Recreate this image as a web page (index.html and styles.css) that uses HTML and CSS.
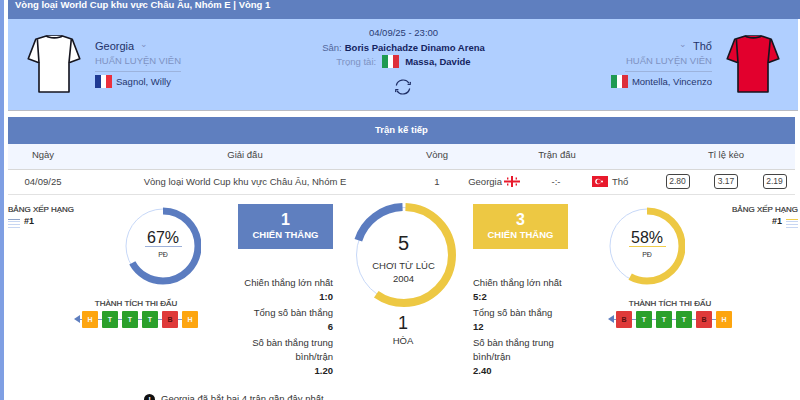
FILE: index.html
```html
<!DOCTYPE html>
<html lang="vi">
<head>
<meta charset="utf-8">
<title>Georgia - Thổ</title>
<link rel="stylesheet" href="styles.css">
</head>
<body>
<svg class="defs" width="0" height="0" aria-hidden="true">
  <defs>
    <symbol id="fr" viewBox="0 0 17 13"><rect width="6" height="13" fill="#1f3a93"/><rect x="6" width="5" height="13" fill="#fff"/><rect x="11" width="6" height="13" fill="#ec2f3c"/></symbol>
    <symbol id="it" viewBox="0 0 17 13"><rect width="6" height="13" fill="#1f9a52"/><rect x="6" width="5" height="13" fill="#fff"/><rect x="11" width="6" height="13" fill="#dd2f3c"/></symbol>
    <symbol id="shirt" viewBox="72 102 174 184"><path d="M135 108h50l30 10 23 60-33 12v90h-92v-90l-33-12 23-60z"/><path class="seam" d="M108 118l5 72M212 118l-7 72M135 108c10 8 40 8 50 0"/></symbol>
  </defs>
</svg>
<div class="page">
  <div class="strip"></div>
  <main class="main">
    <div class="title">Vòng loại World Cup khu vực Châu Âu, Nhóm E | Vòng 1</div>
    <section class="hero">
      <div class="team">
        <svg class="shirt shirt-white"><use href="#shirt"/></svg>
        <div class="team-info">
          <div class="team-name">Georgia <span class="chev">⌄</span></div>
          <div class="coach-label">HUẤN LUYỆN VIÊN</div>
          <div class="coach"><svg class="flag"><use href="#fr"/></svg>Sagnol, Willy</div>
        </div>
      </div>
      <div class="meta">
        <div>04/09/25 - 23:00</div>
        <div class="meta-line"><span class="muted">Sân:</span> <b>Boris Paichadze Dinamo Arena</b></div>
        <div class="meta-line"><span class="faint">Trọng tài:</span><svg class="flag"><use href="#it"/></svg><b>Massa, Davide</b></div>
        <svg class="refresh" width="18" height="18" viewBox="0 0 18 18" fill="none" stroke="#1f2f66" stroke-width="1.2">
          <path d="M2.3 7.5A7 7 0 0 1 15 5.2"/><path d="M15.7 10.5A7 7 0 0 1 3 12.8"/>
          <path d="M13.6 6.4l2.6.1.2-2.6" /><path d="M4.4 11.6l-2.6-.1-.2 2.6"/>
        </svg>
      </div>
      <div class="team team-away">
        <div class="team-info">
          <div class="team-name"><span class="chev">⌄</span> Thổ</div>
          <div class="coach-label">HUẤN LUYỆN VIÊN</div>
          <div class="coach"><svg class="flag"><use href="#it"/></svg>Montella, Vincenzo</div>
        </div>
        <svg class="shirt shirt-red"><use href="#shirt"/></svg>
      </div>
    </section>

    <div class="bar">Trận kế tiếp</div>
    <div class="grid-row head">
      <div>Ngày</div><div>Giải đấu</div><div>Vòng</div><div>Trận đấu</div><div>Tỉ lệ kèo</div>
    </div>
    <div class="grid-row body-row">
      <div>04/09/25</div>
      <div>Vòng loại World Cup khu vực Châu Âu, Nhóm E</div>
      <div>1</div>
      <div class="match">
        <span class="home">Georgia
          <svg class="mini" viewBox="0 0 16 11"><rect width="16" height="11" fill="#fff"/><path d="M7 0h2v11H7zM0 4.5h16v2H0z" fill="#e8192c"/><path d="M3 1.5h1.4v2H3zM11.600 1.500H13v2h-1.400zM3 7.500h1.400v2H3zM11.600 7.500H13v2h-1.400z" fill="#e8192c"/></svg>
        </span>
        <span class="score">-:-</span>
        <span class="away">
          <svg class="mini" viewBox="0 0 16 11"><rect width="16" height="11" fill="#e8192c"/><circle cx="6" cy="5.500" r="2.800" fill="#fff"/><circle cx="6.800" cy="5.500" r="2.200" fill="#e8192c"/><circle cx="10" cy="5.500" r="1" fill="#fff"/></svg>
          Thổ</span>
      </div>
      <div class="odds"><span>2.80</span><span>3.17</span><span>2.19</span></div>
    </div>

    <section class="stats">
      <div class="side">
        <div class="rank">
          <div class="rank-title">BẢNG XẾP HẠNG</div>
          <div class="rank-val"><span class="rank-lines rank-lines-blue"></span><b>#1</b></div>
        </div>
        <div class="side-chart">
          <div class="ring">
            <svg width="76" height="80" viewBox="0 0 76 80"><circle class="track" cx="38" cy="40" r="37"/><circle class="arc arc-blue" cx="38" cy="40" r="35" pathLength="100" stroke-dasharray="67 33"/></svg>
            <div class="ring-text"><div class="pct pct-blue">67%</div><div class="pd">PĐ</div></div>
          </div>
          <div class="form">
            <div class="form-title">THÀNH TÍCH THI ĐẤU</div>
            <div class="form-row"><i class="arrow"></i><span class="h">H</span><span class="t">T</span><span class="t">T</span><span class="t">T</span><span class="b">B</span><span class="h">H</span></div>
          </div>
        </div>
      </div>

      <div class="col col-left">
        <div class="box box-blue"><strong>1</strong><span>CHIẾN THẮNG</span></div>
        <dl class="facts">
          <dt>Chiến thắng lớn nhất</dt><dd>1:0</dd>
          <dt>Tổng số bàn thắng</dt><dd>6</dd>
          <dt>Số bàn thắng trung bình/trận</dt><dd>1.20</dd>
        </dl>
      </div>

      <div class="centre">
        <div class="big-ring">
          <svg width="104" height="106" viewBox="0 0 104 106">
            <circle class="track" cx="52" cy="53" r="47.500"/>
            <circle class="arc-big arc-gold" cx="52" cy="53" r="48" pathLength="100" stroke-dasharray="59.300 40.700" stroke-dashoffset="-0.500"/>
            <circle class="arc-big arc-navy" cx="52" cy="53" r="48" pathLength="100" stroke-dasharray="19.500 80.500" stroke-dashoffset="-80"/>
          </svg>
          <div class="ring-text big-text"><div class="big-num">5</div><div>CHƠI TỪ LÚC</div><div>2004</div></div>
        </div>
        <div class="draw-num">1</div>
        <div class="draw-label">HÒA</div>
      </div>

      <div class="col col-right">
        <div class="box box-gold"><strong>3</strong><span>CHIẾN THẮNG</span></div>
        <dl class="facts">
          <dt>Chiến thắng lớn nhất</dt><dd>5:2</dd>
          <dt>Tổng số bàn thắng</dt><dd>12</dd>
          <dt>Số bàn thắng trung bình/trận</dt><dd>2.40</dd>
        </dl>
      </div>

      <div class="side side-away">
        <div class="side-chart">
          <div class="ring">
            <svg width="76" height="80" viewBox="0 0 76 80"><circle class="track" cx="38" cy="40" r="37"/><circle class="arc arc-yellow" cx="38" cy="40" r="35" pathLength="100" stroke-dasharray="58 42"/></svg>
            <div class="ring-text"><div class="pct pct-gold">58%</div><div class="pd">PĐ</div></div>
          </div>
          <div class="form">
            <div class="form-title">THÀNH TÍCH THI ĐẤU</div>
            <div class="form-row"><i class="arrow"></i><span class="b">B</span><span class="t">T</span><span class="t">T</span><span class="t">T</span><span class="b">B</span><span class="h">H</span></div>
          </div>
        </div>
        <div class="rank rank-away">
          <div class="rank-title">BẢNG XẾP HẠNG</div>
          <div class="rank-val"><b>#1</b><span class="rank-lines rank-lines-gold"></span></div>
        </div>
      </div>
    </section>

    <div class="note"><span class="note-dot">!</span>Georgia đã bắt bại 4 trận gần đây nhất</div>
  </main>
</div>
</body>
</html>
```
FILE: styles.css
```css
* { box-sizing: border-box; }
html, body { margin: 0; height: 400px; overflow: hidden; background: #fff; }
body { font-family: "Liberation Sans", Arial, sans-serif; color: #333; font-size: 9.500px; }
.defs { position: absolute; }
.page { display: flex; height: 400px; overflow: hidden; }
.strip { width: 4px; flex: none; background: #7f9fe3; }
.main { flex: 1; margin-left: 4px; margin-right: 2px; min-width: 0; }

.title { height: 19px; background: #5f7fbf; color: #fff; font-weight: 700; font-size: 9.500px; line-height: 10px; padding-left: 7px; margin-right: -2px; }

.hero { height: 92px; background: #b0cfff; border-bottom: 1px solid #b9bcc4; display: flex; justify-content: space-between; padding: 15px 16px 0 17px; color: #1f2f66; }
.team { display: flex; gap: 12px; width: 250px; }
.team-away { justify-content: flex-end; }
.shirt { width: 58px; height: 60px; flex: none; stroke: #15151f; stroke-width: 5; stroke-linejoin: round; }
.shirt .seam { fill: none; }
.shirt-white { fill: #fff; }
.shirt-red { fill: #e2002d; }
.team-info { width: 86px; padding-top: 3px; }
.team-name { font-size: 11px; line-height: 14px; color: #1f3268; }
.chev { font-size: 9px; color: #7f8fbf; margin: 0 3px; vertical-align: 3px; }
.coach-label { font-size: 9.500px; line-height: 15px; height: 19px; color: #7e92c2; border-bottom: 1px solid #9cb3dd; white-space: nowrap; }
.coach { display: flex; align-items: center; gap: 4px; font-size: 9.500px; line-height: 13px; margin-top: 3px; white-space: nowrap; color: #25366e; }
.team-away .team-info { width: 87px; text-align: right; }
.team-away .coach { justify-content: flex-end; }
.flag { width: 17px; height: 13px; flex: none; }

.meta { display: flex; flex-direction: column; align-items: center; font-size: 9.500px; line-height: 15px; margin-top: -9px; color: #2a3b73; }
.meta b { color: #14245f; }
.meta-line { display: flex; align-items: center; gap: 3px; white-space: pre; height: 14.500px; }
.meta .flag { margin: 0 3px; }
.muted { color: #52679c; }
.faint { color: #7e92c2; }
.refresh { margin-top: 9px; }

.bar { margin-top: 6px; height: 27px; margin-right: 3px; background: #5f7fbf; color: #fff; font-weight: 700; font-size: 9.500px; line-height: 26px; text-align: center; }

.grid-row { display: grid; grid-template-columns: 70px 334px 50px 190px 148px; text-align: center; align-items: center; }
.head { height: 26px; padding-bottom: 4px; background: #f2f6ff; border-bottom: 1px solid #d8d8d8; font-size: 9.500px; color: #444; margin-right: 3px; }
.body-row { height: 25px; padding-bottom: 2px; border-bottom: 1px solid #e2e2e2; font-size: 9.500px; color: #444; margin-right: 3px; }
.match { display: grid; grid-template-columns: 58px 72px 60px; align-items: center; }
.home { display: flex; align-items: center; justify-content: flex-end; gap: 2px; white-space: nowrap; }
.away { display: flex; align-items: center; gap: 4px; }
.mini { width: 16px; height: 11px; flex: none; }
.odds { display: flex; justify-content: center; gap: 24.500px; }
.odds span { width: 24px; height: 15px; border: 1px solid #444; border-radius: 3px; font-size: 8.500px; line-height: 13px; }

.stats { display: grid; grid-template-columns: 230px 95px 140px 95px 230px; height: 195px; }
.side { display: flex; padding-top: 9px; }
.side-away { justify-content: flex-end; }
.rank { width: 66px; flex: none; }
.rank-title { font-size: 8px; color: #333; line-height: 11px; white-space: nowrap; -webkit-text-stroke: 0.2px #333; }
.rank-val { display: flex; gap: 4px; font-size: 9px; line-height: 11px; color: #222; margin-top: 1px; }
.rank-away { text-align: right; }
.rank-away .rank-val { justify-content: flex-end; }
.rank-lines { width: 12px; height: 9px; margin-top: 3px; border-top: 1px solid #8ea2c6; background: repeating-linear-gradient(#fff 0 1px, #c7d6f2 1px 2px, #fff 2px 3px); }
.rank-lines-gold { border-top-color: #efcd4c; }

.side-chart { width: 164px; margin-top: 2px; }
.ring { position: relative; width: 76px; height: 80px; margin-left: 51px; }
.side-away .ring { margin-left: 41px; }
.track { fill: none; stroke: #c7d8f8; stroke-width: 1; }
.arc, .arc-big { fill: none; transform: rotate(-90deg); transform-box: fill-box; transform-origin: center; }
.arc { stroke-width: 7; }
.arc-blue, .arc-navy { stroke: #5b7cc0; }
.arc-yellow, .arc-gold { stroke: #edc843; }
.arc-big { stroke-width: 8; }
.ring-text { position: absolute; inset: 0; display: flex; flex-direction: column; align-items: center; justify-content: center; text-align: center; }
.pct { width: 37px; font-size: 16px; line-height: 17px; color: #222; border-bottom: 1px solid #9db0d8; white-space: nowrap; display: flex; justify-content: center; }
.pct-gold { border-bottom-color: #efcd4c; }
.pd { font-size: 7px; line-height: 16px; color: #333; }

.form { width: 124px; margin-top: 12px; }
.side-away .form { margin-left: 40px; }
.form-title { text-align: center; font-size: 8px; line-height: 11px; color: #333; -webkit-text-stroke: 0.2px #333; white-space: nowrap; }
.form-row { position: relative; display: flex; gap: 4px; justify-content: flex-end; margin-top: 2px; }
.form-row::before { content: ""; position: absolute; left: 2px; right: 4px; top: 8px; height: 1px; background: #7d97cc; }
.arrow { position: absolute; left: 0; top: 4px; border: 4px solid transparent; border-right: 6px solid #5f7fbf; border-left: 0; }
.form-row span { position: relative; width: 16px; height: 17px; border-radius: 1px; text-align: center; font-size: 7px; font-weight: 700; line-height: 17px; color: #f5f5f5; }
.h { background: #fda50f; }
.t { background: #2ba02b; }
.form-row .b { background: #df3a3a; color: #5a1111; }

.col { padding-top: 9px; }
.box { height: 45px; padding-bottom: 2px; display: flex; flex-direction: column; align-items: center; justify-content: center; color: #fff; font-weight: 700; }
.box strong { font-size: 16px; line-height: 18px; }
.box span { font-size: 9.500px; line-height: 12px; }
.box-blue { background: #5f7fbf; }
.box-gold { background: #edc843; }
.facts { margin: 27px 0 0; font-size: 9.500px; line-height: 14px; color: #333; }
.facts dt { margin-top: 2px; }
.facts dd { margin: 0; font-weight: 700; color: #222; }
.col-left .facts { text-align: right; }

.centre { display: flex; flex-direction: column; align-items: center; padding-top: 7px; }
.big-ring { position: relative; width: 104px; height: 106px; margin-left: 1px; }
.big-text { font-size: 9.500px; line-height: 13px; color: #333; padding-top: 4px; }
.big-num { font-size: 20px; line-height: 27px; color: #222; margin-bottom: 2px; }
.draw-num { font-size: 18px; line-height: 20px; margin-top: 5px; color: #222; }
.draw-label { font-size: 9.500px; line-height: 15px; color: #333; }

.note { display: flex; align-items: center; gap: 6px; margin-top: 2px; padding-left: 136px; font-size: 9.500px; line-height: 14px; color: #333; }
.note-dot { flex: none; width: 11px; height: 11px; border-radius: 50%; background: #111; color: #fff; font-size: 8px; line-height: 11px; text-align: center; font-weight: 700; }
```
